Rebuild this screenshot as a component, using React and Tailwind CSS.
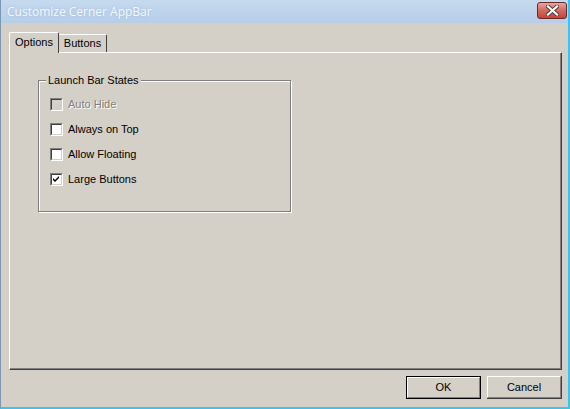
const FONT = { fontFamily: '"Liberation Sans", Arial, sans-serif' }

function CloseGlyph() {
  return (
    <svg width="13" height="11" viewBox="0 0 13 11">
      <path
        d="M2 1.5 L11 9.5 M11 1.5 L2 9.5"
        stroke="#4a3a3a"
        strokeWidth="4"
        strokeLinecap="square"
      />
      <path
        d="M2 1.5 L11 9.5 M11 1.5 L2 9.5"
        stroke="#ffffff"
        strokeWidth="2.2"
        strokeLinecap="square"
      />
    </svg>
  )
}

function Casilla({ label, checked, disabled }) {
  return (
    <div className="flex items-center h-[13px]">
      <div
        className={`w-[13px] h-[13px] shrink-0 border-t border-l border-[#808080] border-r border-b border-r-white border-b-white flex
          ${disabled ? 'bg-[#d4d0c8]' : ''}`}
      >
        <div
          className={`flex-1 border-t border-l border-[#404040] border-r border-b border-r-[#d4d0c8] border-b-[#d4d0c8] flex items-center justify-center
            ${disabled ? 'bg-[#d4d0c8]' : 'bg-white'}`}
        >
          {checked && (
            <svg width="7" height="7" viewBox="0 0 7 7">
              <path d="M0 2 L2 4 L6 0 L6 2 L2 6 L0 4 Z" fill="#000" />
            </svg>
          )}
        </div>
      </div>
      <span
        className={`ml-[5px] text-[11px] leading-none ${
          disabled ? 'text-[#808080] [text-shadow:1px_1px_0_#ffffff]' : 'text-black'
        }`}
      >
        {label}
      </span>
    </div>
  )
}

function Boton({ children, porDefecto }) {
  return (
    <div
      className={`w-[75px] h-[23px] flex ${
        porDefecto ? 'border border-black' : 'border-r border-b border-[#404040]'
      }`}
    >
      <div className="flex-1 flex border-t border-l border-white border-r border-b border-r-[#808080] border-b-[#808080]">
        <div className="flex-1 flex items-center justify-center text-[11px] text-black bg-[#d4d0c8]">
          {children}
        </div>
      </div>
    </div>
  )
}

export default function App() {
  return (
    <div
      className="w-[570px] h-[409px] flex flex-col bg-[#bfd4ea] border-l border-[#7d96b1] border-r-2 border-b-2 border-r-[#3dc4ec] border-b-[#3dc4ec]"
      style={FONT}
    >
      {/* Barra de título */}
      <div className="h-[23px] shrink-0 flex items-center justify-between pl-[6px] pr-[1px] bg-gradient-to-b from-[#c6daef] to-[#b6cee7]">
        <span className="text-[12px] text-[#f4f7fb] [text-shadow:0_0_3px_#9db8d4]" style={{ fontFamily: '"Open Sans", "Noto Sans", sans-serif' }}>
          Customize Cerner AppBar
        </span>
        <div className="w-[30px] h-[17px] mt-[-2px] rounded-[3px] border border-[#6b2a26] bg-gradient-to-b from-[#e6a59e] via-[#d4685d] to-[#c4443a] flex items-center justify-center">
          <CloseGlyph />
        </div>
      </div>

      {/* Área cliente */}
      <div className="flex-1 ml-[1px] bg-[#d4d0c8] pt-[9px] pl-[7px] pr-[5px] flex flex-col">
        {/* Pestañas */}
        <div className="flex items-end h-[20px] relative z-10">
          <div className="w-[50px] h-[21px] -mb-px bg-[#d4d0c8] border-t border-l border-white border-r border-r-[#404040] rounded-t-[2px] flex items-center justify-center text-[11px] text-black">
            <span className="-mt-[1px]">Options</span>
          </div>
          <div className="w-[48px] h-[18px] bg-[#d4d0c8] border-t border-white border-r border-r-[#404040] rounded-tr-[2px] flex items-center justify-center text-[11px] text-black">
            Buttons
          </div>
        </div>

        {/* Panel */}
        <div className="w-[553px] h-[318px] border-t border-l border-white border-r border-b border-r-[#404040] border-b-[#404040] flex">
          <div className="flex-1 border-r border-b border-r-[#808080] border-b-[#808080] pt-[27px] pl-[28px]">
            <div className="relative w-[253px] h-[132px] border border-[#808080] shadow-[inset_1px_1px_0_#ffffff,1px_1px_0_#ffffff] pt-[17px] pl-[11px] flex flex-col gap-[12px]">
              <span className="absolute left-[7px] top-[-7px] px-[2px] bg-[#d4d0c8] text-[11px] leading-[13px] text-black">
                Launch Bar States
              </span>
              <Casilla label="Auto Hide" disabled />
              <Casilla label="Always on Top" />
              <Casilla label="Allow Floating" />
              <Casilla label="Large Buttons" checked />
            </div>
          </div>
        </div>

        {/* Botones */}
        <div className="flex justify-end gap-[6px] mt-[6px] w-[553px]">
          <Boton porDefecto>OK</Boton>
          <Boton>Cancel</Boton>
        </div>
      </div>
    </div>
  )
}
